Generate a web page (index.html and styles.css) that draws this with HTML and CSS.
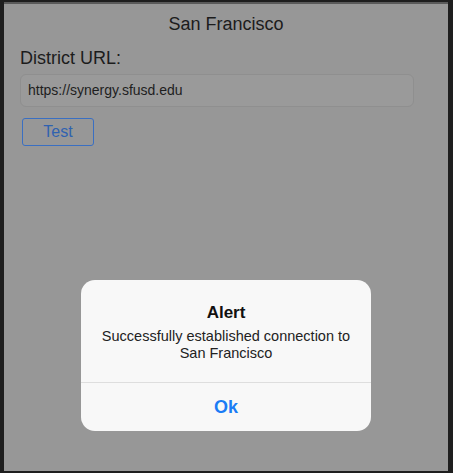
FILE: index.html
```html
<!DOCTYPE html>
<html lang="en">
<head>
    <meta charset="UTF-8">
    <meta name="viewport" content="width=device-width, initial-scale=1.0">
    <title>San Francisco</title>
    <link rel="stylesheet" href="styles.css">
</head>
<body>
    <div class="screen">
        <div class="sheet">
            <div class="title">San Francisco</div>
            <label class="label">District URL:</label>
            <div class="field">https://synergy.sfusd.edu</div>
            <button class="test">Test</button>

            <div class="alert">
                <div class="alert-body">
                    <div class="alert-title">Alert</div>
                    <div class="alert-text">Successfully established connection to<br>San Francisco</div>
                </div>
                <div class="alert-action">Ok</div>
            </div>
        </div>
    </div>
</body>
</html>
```

FILE: styles.css
```css
body {
    margin: 0;
    background-color: #1e1e1e;
    font-family: "Liberation Sans", Arial, sans-serif;
    width: 453px;
    height: 473px;
    overflow: hidden;
}

.screen {
    padding: 2px 5px 0 4px;
    height: 471px;
}

.sheet {
    position: relative;
    border-top: 2px solid #5a5a5a;
    background-color: #979797;
    height: 469px;
    display: flex;
    flex-direction: column;
    padding: 0 34px 0 16px;
    box-sizing: border-box;
}

.title {
    text-align: center;
    font-size: 18px;
    color: #1c1c1c;
    margin: 9px -18px 0 0;
    height: 22px;
    line-height: 22px;
}

.label {
    font-size: 18px;
    color: #1c1c1c;
    margin-top: 12px;
    line-height: 22px;
}

.field {
    margin-top: 5px;
    height: 31px;
    border: 1px solid #8f8f8f;
    background-color: #9a9a9a;
    border-radius: 6px;
    font-size: 14px;
    color: #1e1e1e;
    line-height: 31px;
    padding-left: 7px;
}

.test {
    margin: 11px 0 0 2px;
    width: 72px;
    height: 28px;
    background: transparent;
    border: 1px solid #3a6fc2;
    border-radius: 3px;
    color: #2f62b0;
    font-family: "Liberation Sans", Arial, sans-serif;
    font-size: 16px;
    padding: 0;
}

.alert {
    position: absolute;
    left: 77px;
    top: 276px;
    width: 290px;
    height: 151px;
    background-color: #f8f8f8;
    border-radius: 14px;
    display: flex;
    flex-direction: column;
    text-align: center;
}

.alert-body {
    padding-top: 22px;
    height: 103px;
    box-sizing: border-box;
    border-bottom: 1px solid #dedede;
}

.alert-title {
    font-size: 17px;
    font-weight: bold;
    color: #111;
    line-height: 22px;
}

.alert-text {
    font-size: 14.5px;
    color: #222;
    line-height: 17px;
    margin-top: 4px;
}

.alert-action {
    flex: 1;
    display: flex;
    align-items: center;
    justify-content: center;
    font-size: 18px;
    font-weight: bold;
    color: #1a7cf5;
}
```
